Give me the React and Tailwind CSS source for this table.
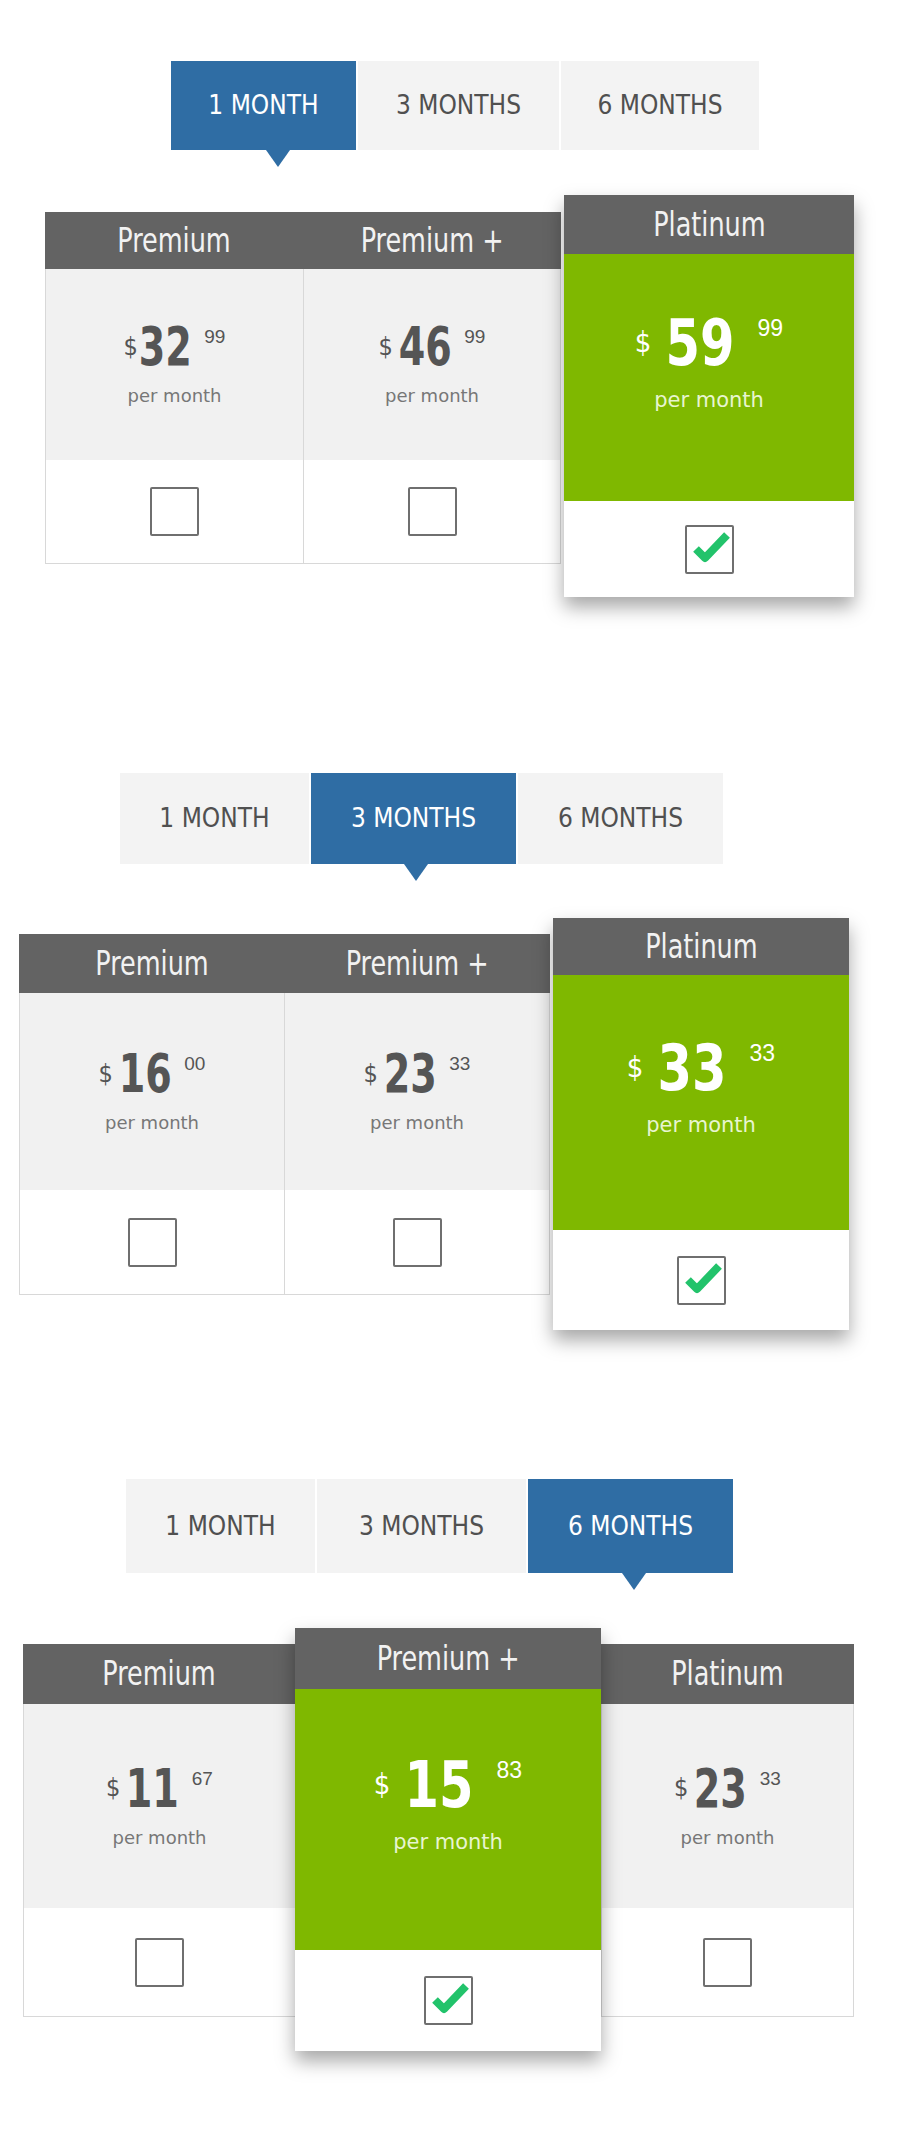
const labels = ['1 MONTH', '3 MONTHS', '6 MONTHS']

// each block is its own snapshot, so sizes differ a little between them
const sections = [
  {
    wrap: 'mt-[61px]',
    tabs: 'ml-[171px]',
    tabW: ['w-[185px]', 'w-[201px]', 'w-[198px]'],
    tabH: 'h-[89px]',
    active: 0,
    arrow: 'left-[calc(50%+2px)]',
    row: 'mt-[45px] ml-[45px]',
    offset: 'mt-[17px]',
    normal: ['h-[57px]', 'h-[191px]', 'h-[103px]'],
    hl: ['h-[59px]', 'h-[247px]', 'h-[96px]'],
    cards: [
      { name: 'Premium', w: 'w-[258px]', dollars: '32', cents: '99', tight: true },
      { name: 'Premium +', w: 'w-[258px]', dollars: '46', cents: '99', br: true },
      { name: 'Platinum', w: 'w-[290px] ml-[3px]', dollars: '59', cents: '99', hl: true },
    ],
  },
  {
    wrap: 'mt-[176px]',
    tabs: 'ml-[120px]',
    tabW: ['w-[189px]', 'w-[205px]', 'w-[205px]'],
    tabH: 'h-[91px]',
    active: 1,
    arrow: 'left-[calc(50%-10px)]',
    row: 'mt-[54px] ml-[19px]',
    offset: 'mt-[16px]',
    normal: ['h-[59px]', 'h-[197px]', 'h-[104px]'],
    hl: ['h-[57px]', 'h-[255px]', 'h-[100px]'],
    cards: [
      { name: 'Premium', w: 'w-[265px]', dollars: '16', cents: '00' },
      { name: 'Premium +', w: 'w-[266px]', dollars: '23', cents: '33', br: true },
      { name: 'Platinum', w: 'w-[296px] ml-[3px]', dollars: '33', cents: '33', hl: true },
    ],
  },
  {
    wrap: 'mt-[149px]',
    tabs: 'ml-[126px]',
    tabW: ['w-[189px]', 'w-[209px]', 'w-[205px]'],
    tabH: 'h-[94px]',
    active: 2,
    arrow: 'left-[calc(50%-9px)]',
    row: 'mt-[55px] ml-[23px]',
    offset: 'mt-[16px]',
    normal: ['h-[60px]', 'h-[204px]', 'h-[108px]'],
    hl: ['h-[61px]', 'h-[261px]', 'h-[101px]'],
    cards: [
      { name: 'Premium', w: 'w-[272px]', dollars: '11', cents: '67' },
      { name: 'Premium +', w: 'w-[306px]', dollars: '15', cents: '83', hl: true },
      { name: 'Platinum', w: 'w-[253px]', dollars: '23', cents: '33', br: true },
    ],
  },
]

function Tabs({ s }) {
  return (
    <div className={`flex gap-[2px] ${s.tabs}`}>
      {labels.map((label, i) => {
        const on = i === s.active
        return (
          <div
            key={label}
            className={`relative flex items-center justify-center font-['DejaVu_Sans_Condensed','DejaVu_Sans',sans-serif] text-[26px] ${s.tabW[i]} ${s.tabH} ${
              on ? 'bg-[#2f6da4] text-white' : 'bg-[#f3f3f3] text-[#505050]'
            }`}
          >
            {label}
            {on && (
              <span
                className={`absolute top-full h-0 w-0 border-l-[12px] border-r-[12px] border-t-[17px] border-l-transparent border-r-transparent border-t-[#2f6da4] ${s.arrow}`}
              />
            )}
          </div>
        )
      })}
    </div>
  )
}

function Checkbox({ checked }) {
  return (
    <div className="relative h-[49px] w-[49px] rounded-[2px] border-2 border-[#6f6f6f] bg-white">
      {checked && (
        <svg className="absolute -left-[2px] -top-[2px]" width="49" height="49" viewBox="0 0 49 49">
          <path d="M11 24 L20 33 L42 10" fill="none" stroke="#22c36b" strokeWidth="8" strokeLinejoin="round" />
        </svg>
      )}
    </div>
  )
}

function Price({ c }) {
  const hl = c.hl
  return (
    <div className={`flex flex-col items-center font-['DejaVu_Sans_Condensed','DejaVu_Sans',sans-serif] ${hl ? 'pb-[28px] text-white' : 'text-[#555]'}`}>
      <div className="flex items-start">
        <span className={`self-center ${hl ? 'mr-[14px] text-[29px]' : c.tight ? 'mr-0 text-[25px]' : 'mr-[5px] text-[25px]'}`}>$</span>
        {hl ? (
          <span className="-mx-[5px] inline-block scale-x-[0.86] text-[64px] leading-none font-bold">{c.dollars}</span>
        ) : (
          <span className="-mx-[6px] inline-block scale-x-[0.8] text-[53px] leading-none font-bold">{c.dollars}</span>
        )}
        <span
          className={`font-['Liberation_Sans',sans-serif] leading-none ${hl ? 'ml-[22px] mt-[6px] text-[23px]' : 'ml-[12px] mt-[7px] text-[19px]'}`}
        >
          {c.cents}
        </span>
      </div>
      <div
        className={`font-['DejaVu_Sans',sans-serif] ${hl ? 'mt-[10px] text-[21px] text-[#e8f5d0]' : 'mt-[9px] text-[18px] text-[#777]'}`}
      >
        per month
      </div>
    </div>
  )
}

function Title({ h, name }) {
  return (
    <div className={`flex items-center justify-center bg-[#636363] text-[#f2f2f2] ${h}`}>
      <span className="inline-block scale-x-[0.86] font-['DejaVu_Sans_Condensed','DejaVu_Sans',sans-serif] text-[33px]">{name}</span>
    </div>
  )
}

function Card({ c, s }) {
  const [h, b, f] = c.hl ? s.hl : s.normal

  if (c.hl) {
    return (
      <div className={`relative z-10 flex shrink-0 flex-col bg-white shadow-[0_10px_18px_rgba(0,0,0,0.35)] ${c.w}`}>
        <Title h={h} name={c.name} />
        <div className={`flex items-center justify-center bg-[#7fb800] ${b}`}>
          <Price c={c} />
        </div>
        <div className={`flex items-center justify-center bg-white ${f}`}>
          <Checkbox checked />
        </div>
      </div>
    )
  }

  return (
    <div className={`flex shrink-0 flex-col ${c.w} ${s.offset}`}>
      <Title h={h} name={c.name} />
      <div className={`flex flex-col border-b border-l border-[#d8d8d8] ${c.br ? 'border-r' : ''}`}>
        <div className={`flex items-center justify-center bg-[#f1f1f1] ${b}`}>
          <Price c={c} />
        </div>
        <div className={`flex items-center justify-center bg-white ${f}`}>
          <Checkbox />
        </div>
      </div>
    </div>
  )
}

export default function App() {
  return (
    <div className="h-[2140px] w-[900px] overflow-hidden bg-white">
      {sections.map((s, i) => (
        <section key={i} className={`flex flex-col ${s.wrap}`}>
          <Tabs s={s} />
          <div className={`flex items-start ${s.row}`}>
            {s.cards.map((c) => (
              <Card key={c.name} c={c} s={s} />
            ))}
          </div>
        </section>
      ))}
    </div>
  )
}
